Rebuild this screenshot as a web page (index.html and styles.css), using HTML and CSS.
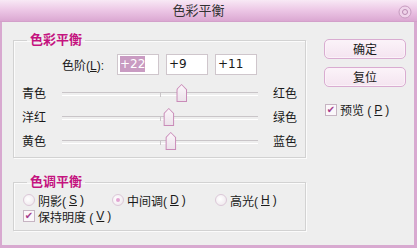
FILE: index.html
```html
<!DOCTYPE html>
<html lang="zh-CN">
<head>
  <meta charset="UTF-8">
  <title>色彩平衡</title>
  <link rel="stylesheet" href="styles.css">
</head>
<body>
  <div class="window">
    <div class="titlebar">
      <span class="title">色彩平衡</span>
      <span class="close">
        <svg width="14" height="14" viewBox="0 0 14 14">
          <circle cx="7" cy="7" r="6" fill="#efd3ea" stroke="#c79bc0" stroke-width="1"/>
          <circle cx="7" cy="7" r="2.5" fill="none" stroke="#b98ab2" stroke-width="1"/>
        </svg>
      </span>
    </div>

    <div class="content">
      <div class="main">
        <fieldset class="group balance">
          <legend>色彩平衡</legend>
          <div class="levels">
            <span class="levels-label">色阶(<u>L</u>):</span>
            <span class="num"><span class="sel">+22</span></span>
            <span class="num">+9</span>
            <span class="num">+11</span>
          </div>

          <div class="slider-row">
            <span class="lbl">青色</span>
            <div class="track"><span class="thumb" style="left: 61%"></span></div>
            <span class="lbl right">红色</span>
          </div>
          <div class="slider-row">
            <span class="lbl">洋红</span>
            <div class="track"><span class="thumb" style="left: 54.5%"></span></div>
            <span class="lbl right">绿色</span>
          </div>
          <div class="slider-row">
            <span class="lbl">黄色</span>
            <div class="track"><span class="thumb" style="left: 55.5%"></span></div>
            <span class="lbl right">蓝色</span>
          </div>
        </fieldset>

        <fieldset class="group tone">
          <legend>色调平衡</legend>
          <div class="radios">
            <span class="radio r1"><i class="dot"></i>阴影(<u>S</u>)</span>
            <span class="radio r2"><i class="dot on"></i>中间调(<u>D</u>)</span>
            <span class="radio"><i class="dot"></i>高光(<u>H</u>)</span>
          </div>
          <div class="check-row">
            <span class="check"><i class="box">&#10004;</i>保持明度 (<u>V</u>)</span>
          </div>
        </fieldset>
      </div>

      <div class="side">
        <button class="btn">确定</button>
        <button class="btn">复位</button>
        <span class="check preview"><i class="box">&#10004;</i>预览 (<u>P</u>)</span>
      </div>
    </div>
  </div>
</body>
</html>
```

FILE: styles.css
```css
* { box-sizing: border-box; margin: 0; padding: 0; }
body {
  width: 417px;
  height: 248px;
  overflow: hidden;
  font-family: "Liberation Sans", "Noto Sans CJK SC", sans-serif;
  font-size: 12px;
  color: #1a1a1a;
  background: #eeeeee;
  text-autospace: no-autospace;
}
.window {
  width: 417px;
  height: 248px;
  display: flex;
  flex-direction: column;
}
.titlebar {
  height: 22px;
  position: relative;
  display: flex;
  align-items: center;
  justify-content: center;
  background: linear-gradient(180deg, #f8e9f5 0%, #ecc6e5 50%, #dba8d2 100%);
  border-bottom: 1px solid #d3a0ca;
}
.title {
  font-size: 13px;
  color: #333;
  line-height: 22px;
  padding-right: 20px;
}
.close {
  position: absolute;
  right: 5px;
  top: 5px;
  width: 14px;
  height: 14px;
}
.close svg { display: block; }

.content {
  flex: 1;
  display: flex;
  border-left: 2px solid #d8a9d0;
  border-right: 3px solid #d8a9d0;
  border-bottom: 3px solid #d8a9d0;
  padding: 11px 0 0 11px;
  background: #eeeeee;
}
.main { width: 293px; }

.group {
  border: 1px solid #d2d2d2;
  box-shadow: inset 1px 1px 0 #fbfbfb, 1px 1px 0 #fbfbfb;
  min-width: 0;
}
.group legend {
  margin-left: 13px;
  padding: 0 3px;
  font-size: 13px;
  line-height: 14px;
  font-weight: bold;
  color: #c4137f;
}
.balance { padding: 0 0 3px 0; }
.tone { margin-top: 17px; padding: 0 0 6px 0; }

.levels {
  display: flex;
  align-items: center;
  margin-top: 7px;
  padding-left: 48px;
}
.levels-label { width: 55px; }
.num {
  width: 42px;
  height: 21px;
  margin-right: 7px;
  background: #fff;
  border: 1px solid #cfc6cc;
  font-family: "DejaVu Sans", sans-serif;
  font-size: 12px;
  line-height: 19px;
  padding-left: 2px;
}
.sel {
  background: #c99bc2;
  color: #fff;
  padding: 1px 0;
}

.slider-row {
  display: flex;
  align-items: center;
  height: 24px;
  padding-left: 8px;
}
.levels + .slider-row { margin-top: 7px; }
.lbl { width: 40px; line-height: 24px; }
.lbl.right { width: auto; margin-left: 15px; }
.track {
  position: relative;
  width: 196px;
  height: 24px;
}
.track::before {
  content: "";
  position: absolute;
  left: 0;
  right: 0;
  top: 10px;
  height: 2px;
  border-top: 1px solid #c9c5c8;
  border-bottom: 1px solid #ffffff;
}
.track::after {
  content: "";
  position: absolute;
  left: 98px;
  top: 10px;
  width: 1px;
  height: 5px;
  background: #c9c5c8;
}
.thumb {
  position: absolute;
  top: 2px;
  width: 11px;
  height: 18px;
  transform: translateX(-50%);
  background: #c98bb8;
  clip-path: polygon(50% 0, 100% 30%, 100% 100%, 0 100%, 0 30%);
  z-index: 1;
}
.thumb::before {
  content: "";
  position: absolute;
  left: 1px;
  right: 1px;
  top: 1px;
  bottom: 1px;
  background: linear-gradient(180deg, #fbf6fa, #ece2ea);
  clip-path: polygon(50% 0, 100% 30%, 100% 100%, 0 100%, 0 30%);
}

.radios {
  display: flex;
  align-items: center;
  height: 16px;
  margin-top: 3px;
  padding-left: 9px;
}
.radio {
  display: flex;
  align-items: center;
  gap: 3px;
}
.radio.r1 { width: 89px; }
.radio.r2 { width: 103px; }
.dot {
  width: 12px;
  height: 12px;
  border-radius: 50%;
  border: 1px solid #dcc8d8;
  background: radial-gradient(circle at 40% 40%, #ffffff, #ece4ea);
  position: relative;
}
.dot.on::after {
  content: "";
  position: absolute;
  left: 3px;
  top: 3px;
  width: 4px;
  height: 4px;
  border-radius: 50%;
  background: #e2a4d2;
}
.check-row {
  height: 16px;
  padding-left: 9px;
  display: flex;
  align-items: center;
}
.check {
  display: flex;
  align-items: center;
  gap: 3px;
}
.box {
  width: 12px;
  height: 12px;
  border: 1px solid #c6b4c2;
  background: #fbf7fa;
  color: #a63e8c;
  font-style: normal;
  font-size: 10px;
  line-height: 10px;
  text-align: center;
  font-family: "DejaVu Sans", sans-serif;
}

.side {
  width: 82px;
  margin-left: 18px;
  padding-top: 6px;
  display: flex;
  flex-direction: column;
}
.btn {
  width: 82px;
  height: 20px;
  margin-bottom: 8px;
  border: 1px solid #d9acd1;
  border-radius: 5px;
  background: linear-gradient(180deg, #fbf3f9, #f4e4f0);
  box-shadow: inset 0 0 0 1px #fbf2f8;
  font-family: "Noto Sans CJK SC", sans-serif;
  font-size: 12px;
  color: #1a1a1a;
  line-height: 18px;
}
.preview { margin-top: 6px; padding-left: 1px; }
```
